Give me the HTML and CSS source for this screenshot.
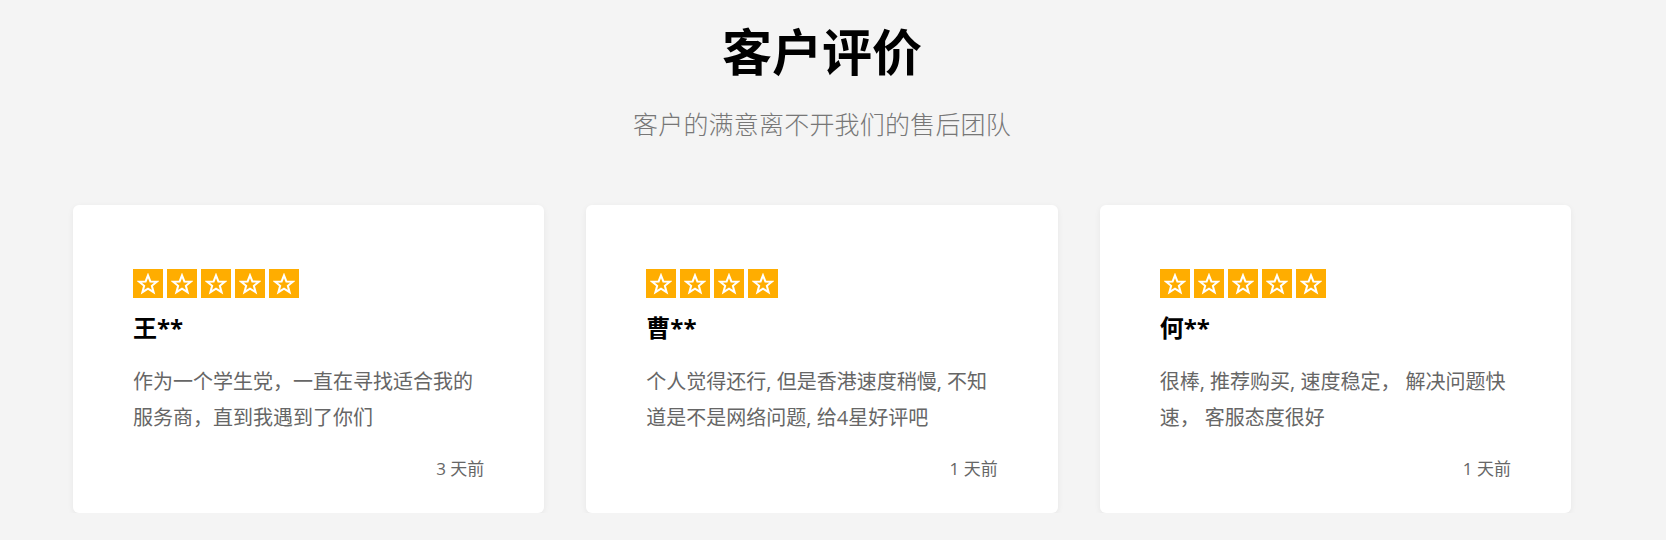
FILE: index.html
```html
<!DOCTYPE html>
<html lang="zh-CN">
<head>
    <meta charset="UTF-8">
    <meta name="viewport" content="width=device-width, initial-scale=1.0">
    <title>客户评价</title>
    <link rel="stylesheet" href="styles.css">
</head>
<body>
    <section class="testimonials">
        <div class="section-header">
            <h1>客户评价</h1>
            <p>客户的满意离不开我们的售后团队</p>
        </div>

        <div class="review-list">
            <div class="review-card">
                <div class="stars">
                    <span class="star"><svg viewBox="0 0 24 24"><polygon points="12,2.5 14.6,9.2 21.7,9.5 16.2,14 18.1,20.9 12,17 5.9,20.9 7.8,14 2.3,9.5 9.4,9.2"/></svg></span>
                    <span class="star"><svg viewBox="0 0 24 24"><polygon points="12,2.5 14.6,9.2 21.7,9.5 16.2,14 18.1,20.9 12,17 5.9,20.9 7.8,14 2.3,9.5 9.4,9.2"/></svg></span>
                    <span class="star"><svg viewBox="0 0 24 24"><polygon points="12,2.5 14.6,9.2 21.7,9.5 16.2,14 18.1,20.9 12,17 5.9,20.9 7.8,14 2.3,9.5 9.4,9.2"/></svg></span>
                    <span class="star"><svg viewBox="0 0 24 24"><polygon points="12,2.5 14.6,9.2 21.7,9.5 16.2,14 18.1,20.9 12,17 5.9,20.9 7.8,14 2.3,9.5 9.4,9.2"/></svg></span>
                    <span class="star"><svg viewBox="0 0 24 24"><polygon points="12,2.5 14.6,9.2 21.7,9.5 16.2,14 18.1,20.9 12,17 5.9,20.9 7.8,14 2.3,9.5 9.4,9.2"/></svg></span>
                </div>
                <h3 class="review-name">王**</h3>
                <p class="review-text">作为一个学生党，一直在寻找适合我的服务商，直到我遇到了你们</p>
                <div class="review-date">3 天前</div>
            </div>

            <div class="review-card">
                <div class="stars">
                    <span class="star"><svg viewBox="0 0 24 24"><polygon points="12,2.5 14.6,9.2 21.7,9.5 16.2,14 18.1,20.9 12,17 5.9,20.9 7.8,14 2.3,9.5 9.4,9.2"/></svg></span>
                    <span class="star"><svg viewBox="0 0 24 24"><polygon points="12,2.5 14.6,9.2 21.7,9.5 16.2,14 18.1,20.9 12,17 5.9,20.9 7.8,14 2.3,9.5 9.4,9.2"/></svg></span>
                    <span class="star"><svg viewBox="0 0 24 24"><polygon points="12,2.5 14.6,9.2 21.7,9.5 16.2,14 18.1,20.9 12,17 5.9,20.9 7.8,14 2.3,9.5 9.4,9.2"/></svg></span>
                    <span class="star"><svg viewBox="0 0 24 24"><polygon points="12,2.5 14.6,9.2 21.7,9.5 16.2,14 18.1,20.9 12,17 5.9,20.9 7.8,14 2.3,9.5 9.4,9.2"/></svg></span>
                </div>
                <h3 class="review-name">曹**</h3>
                <p class="review-text">个人觉得还行, 但是香港速度稍慢, 不知道是不是网络问题, 给4星好评吧</p>
                <div class="review-date">1 天前</div>
            </div>

            <div class="review-card">
                <div class="stars">
                    <span class="star"><svg viewBox="0 0 24 24"><polygon points="12,2.5 14.6,9.2 21.7,9.5 16.2,14 18.1,20.9 12,17 5.9,20.9 7.8,14 2.3,9.5 9.4,9.2"/></svg></span>
                    <span class="star"><svg viewBox="0 0 24 24"><polygon points="12,2.5 14.6,9.2 21.7,9.5 16.2,14 18.1,20.9 12,17 5.9,20.9 7.8,14 2.3,9.5 9.4,9.2"/></svg></span>
                    <span class="star"><svg viewBox="0 0 24 24"><polygon points="12,2.5 14.6,9.2 21.7,9.5 16.2,14 18.1,20.9 12,17 5.9,20.9 7.8,14 2.3,9.5 9.4,9.2"/></svg></span>
                    <span class="star"><svg viewBox="0 0 24 24"><polygon points="12,2.5 14.6,9.2 21.7,9.5 16.2,14 18.1,20.9 12,17 5.9,20.9 7.8,14 2.3,9.5 9.4,9.2"/></svg></span>
                    <span class="star"><svg viewBox="0 0 24 24"><polygon points="12,2.5 14.6,9.2 21.7,9.5 16.2,14 18.1,20.9 12,17 5.9,20.9 7.8,14 2.3,9.5 9.4,9.2"/></svg></span>
                </div>
                <h3 class="review-name">何**</h3>
                <p class="review-text">很棒, 推荐购买, 速度稳定，&nbsp;解决问题快速，&nbsp;客服态度很好</p>
                <div class="review-date">1 天前</div>
            </div>
        </div>
    </section>
</body>
</html>
```

FILE: styles.css
```css
* {
    margin: 0;
    padding: 0;
    box-sizing: border-box;
    font-family: 'Open Sans', 'Noto Sans CJK SC', sans-serif;
}

body {
    background-color: #f4f4f4;
}

.testimonials {
    width: 1498px;
    margin-left: 73px;
    padding-top: 23px;
}

.section-header {
    text-align: center;
}

.section-header h1 {
    color: #000;
    font-size: 50px;
    font-weight: bold;
    line-height: 58px;
}

.section-header p {
    color: #777;
    font-size: 25px;
    font-weight: 300;
    line-height: 32px;
    letter-spacing: 0.2px;
    margin-top: 27px;
}

.review-list {
    display: grid;
    grid-template-columns: repeat(3, 1fr);
    gap: 42px;
    margin-top: 65px;
}

.review-card {
    background-color: white;
    border-radius: 6px;
    box-shadow: 0 2px 6px rgba(0, 0, 0, 0.06);
    padding: 64px 60px 32px;
}

.stars {
    display: flex;
    gap: 4px;
    height: 29px;
}

.star {
    width: 30px;
    height: 29px;
    background-color: #ffad00;
    display: flex;
    align-items: center;
    justify-content: center;
}

.star svg {
    width: 22px;
    height: 22px;
    fill: none;
    stroke: white;
    stroke-width: 2.2;
}

.review-name {
    color: #000;
    font-size: 24px;
    font-weight: bold;
    line-height: 32px;
    margin-top: 14px;
}

.review-text {
    color: #666;
    font-size: 20px;
    line-height: 36px;
    margin-top: 20px;
    height: 72px;
}

.review-date {
    color: #666;
    font-size: 17px;
    line-height: 24px;
    text-align: right;
    margin-top: 21px;
}
```
